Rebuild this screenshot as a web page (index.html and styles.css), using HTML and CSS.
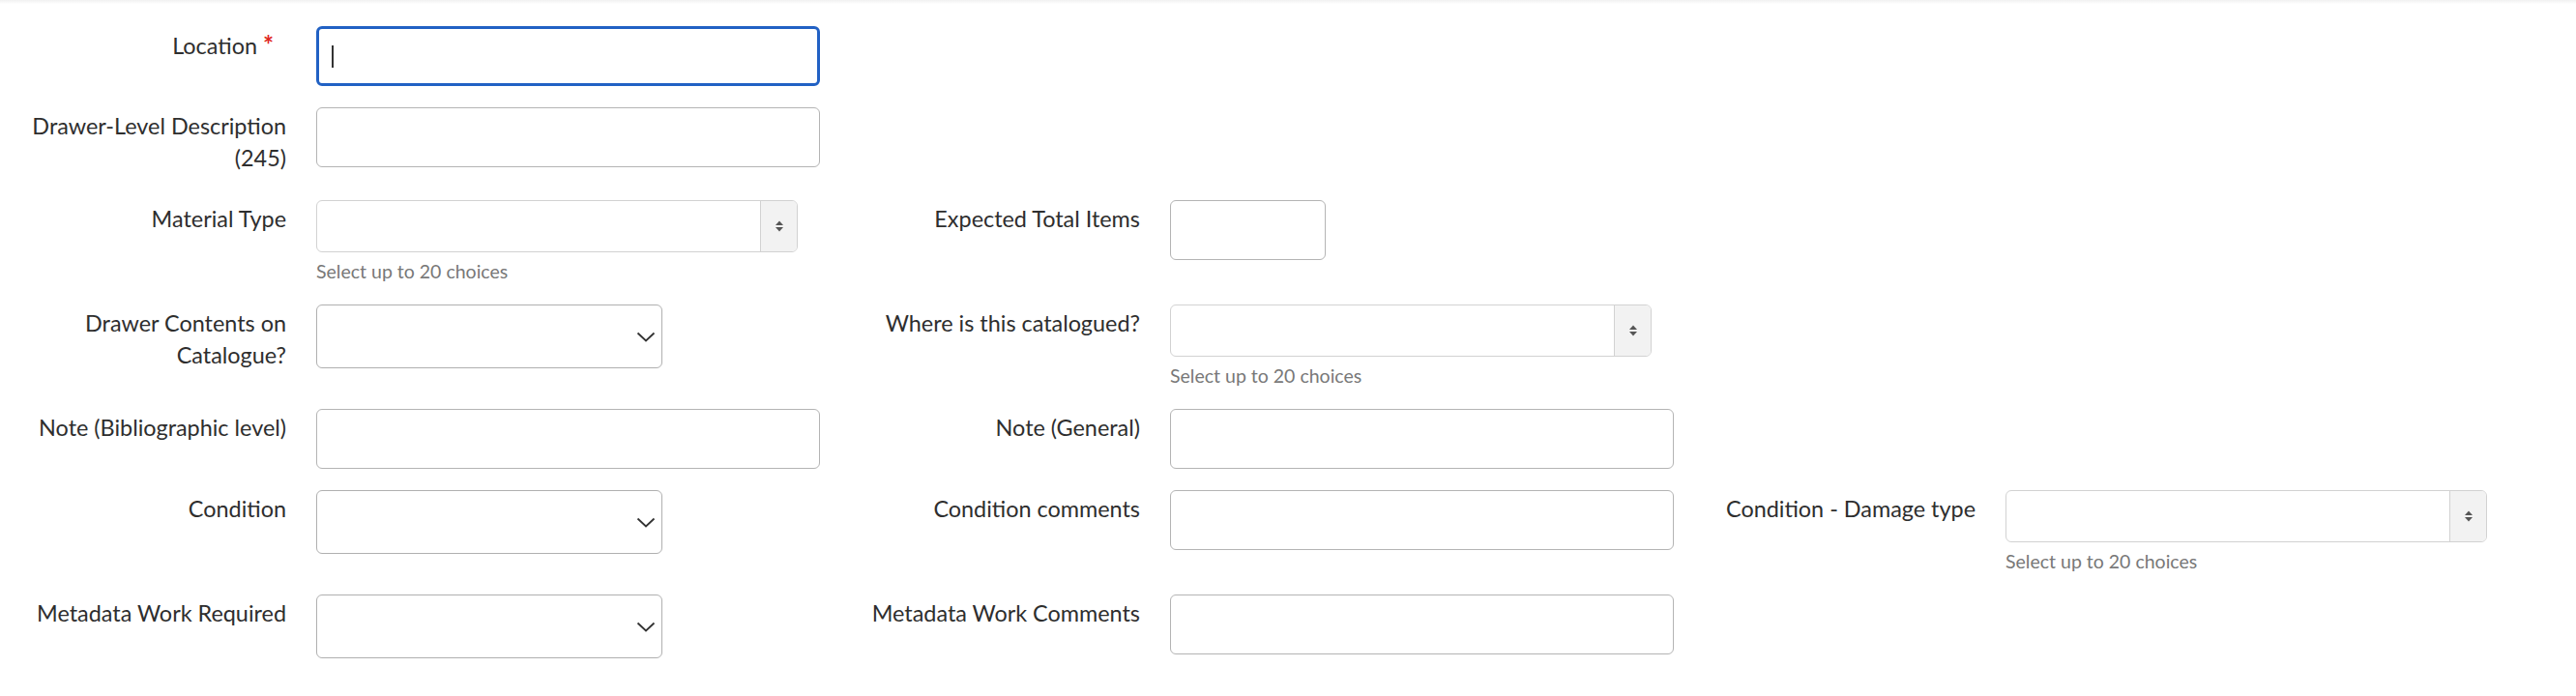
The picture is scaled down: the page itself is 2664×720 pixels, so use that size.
FILE: index.html
```html
<!DOCTYPE html>
<html lang="en">
<head>
<meta charset="utf-8">
<title>Drawer form</title>
<link rel="stylesheet" href="styles.css">
</head>
<body>
<div class="topband"></div>
<form class="form">
  <div class="row">
    <div class="field">
      <label class="label">Location <span class="req">*</span></label>
      <div class="ctl caret-wrap">
        <input class="input wide focused" type="text">
        <span class="caret"></span>
      </div>
    </div>
  </div>

  <div class="row">
    <div class="field">
      <label class="label">Drawer-Level Description (245)</label>
      <div class="ctl"><input class="input wide" type="text"></div>
    </div>
  </div>

  <div class="row">
    <div class="field">
      <label class="label">Material Type</label>
      <div class="ctl">
        <div class="multi"><div class="multi-main"></div><div class="multi-btn"><svg width="10" height="14" viewBox="0 0 10 14"><path d="M1 6 L5 1.5 L9 6 Z" fill="#555"/><path d="M1 8 L5 12.5 L9 8 Z" fill="#555"/></svg></div></div>
        <div class="help">Select up to 20 choices</div>
      </div>
    </div>
    <div class="field">
      <label class="label">Expected Total Items</label>
      <div class="ctl"><input class="input small" type="text"></div>
    </div>
  </div>

  <div class="row">
    <div class="field">
      <label class="label">Drawer Contents on Catalogue?</label>
      <div class="ctl">
        <div class="select"><svg class="chev" width="20" height="11" viewBox="0 0 20 11"><path d="M1.5 1.5 L10 9.5 L18.5 1.5" fill="none" stroke="#333" stroke-width="1.8"/></svg></div>
      </div>
    </div>
    <div class="field">
      <label class="label">Where is this catalogued?</label>
      <div class="ctl">
        <div class="multi"><div class="multi-main"></div><div class="multi-btn"><svg width="10" height="14" viewBox="0 0 10 14"><path d="M1 6 L5 1.5 L9 6 Z" fill="#555"/><path d="M1 8 L5 12.5 L9 8 Z" fill="#555"/></svg></div></div>
        <div class="help">Select up to 20 choices</div>
      </div>
    </div>
  </div>

  <div class="row">
    <div class="field">
      <label class="label">Note (Bibliographic level)</label>
      <div class="ctl"><input class="input wide" type="text"></div>
    </div>
    <div class="field">
      <label class="label">Note (General)</label>
      <div class="ctl"><input class="input wide" type="text"></div>
    </div>
  </div>

  <div class="row">
    <div class="field">
      <label class="label">Condition</label>
      <div class="ctl">
        <div class="select"><svg class="chev" width="20" height="11" viewBox="0 0 20 11"><path d="M1.5 1.5 L10 9.5 L18.5 1.5" fill="none" stroke="#333" stroke-width="1.8"/></svg></div>
      </div>
    </div>
    <div class="field">
      <label class="label">Condition comments</label>
      <div class="ctl"><input class="input wide" type="text"></div>
    </div>
    <div class="field">
      <label class="label">Condition - Damage type</label>
      <div class="ctl">
        <div class="multi"><div class="multi-main"></div><div class="multi-btn"><svg width="10" height="14" viewBox="0 0 10 14"><path d="M1 6 L5 1.5 L9 6 Z" fill="#555"/><path d="M1 8 L5 12.5 L9 8 Z" fill="#555"/></svg></div></div>
        <div class="help">Select up to 20 choices</div>
      </div>
    </div>
  </div>

  <div class="row">
    <div class="field">
      <label class="label">Metadata Work Required</label>
      <div class="ctl">
        <div class="select"><svg class="chev" width="20" height="11" viewBox="0 0 20 11"><path d="M1.5 1.5 L10 9.5 L18.5 1.5" fill="none" stroke="#333" stroke-width="1.8"/></svg></div>
      </div>
    </div>
    <div class="field">
      <label class="label">Metadata Work Comments</label>
      <div class="ctl"><input class="input wide" type="text"></div>
    </div>
  </div>
</form>
</body>
</html>
```

FILE: styles.css
```css
html, body {
  margin: 0;
  padding: 0;
  background: #ffffff;
}

body {
  font-family: "Lato", "Open Sans", "Liberation Sans", sans-serif;
  color: #2e2e2e;
}

.topband {
  height: 4px;
  background: linear-gradient(#f1f1f1, #ffffff);
}

.form {
  display: flex;
  flex-direction: column;
  gap: 22px;
  padding-top: 23px;
}

.row {
  display: grid;
  grid-template-columns: 883px 864px 864px;
  align-items: start;
}

.field {
  display: flex;
  align-items: flex-start;
}

.label {
  flex: 0 0 296px;
  width: 296px;
  box-sizing: border-box;
  margin-right: 31px;
  padding: 3px 0 5px;
  text-align: right;
  font-size: 23.4px;
  line-height: 33px;
  color: #2e2e2e;
}

.req {
  color: #e0271f;
  font-weight: 700;
  font-size: 26px;
  padding-right: 13px;
}

.ctl {
  display: flex;
  flex-direction: column;
}

.caret-wrap {
  position: relative;
}

.input {
  box-sizing: border-box;
  height: 62px;
  border: 1px solid #b4b4b4;
  border-radius: 6px;
  background: #ffffff;
  font-family: inherit;
  font-size: 22px;
  padding: 0 14px;
  margin: 0;
  outline: none;
}

.input.wide {
  width: 521px;
}

.input.small {
  width: 161px;
}

.input.focused {
  border: 3px solid #2161c4;
}

.caret {
  position: absolute;
  left: 16px;
  top: 20px;
  width: 2px;
  height: 23px;
  background: #333333;
}

.select {
  box-sizing: border-box;
  width: 358px;
  height: 66px;
  border: 1px solid #b0b0b0;
  border-radius: 6px;
  background: #ffffff;
  display: flex;
  align-items: center;
  justify-content: flex-end;
  padding-right: 6px;
}

.chev {
  display: block;
}

.multi {
  box-sizing: border-box;
  width: 498px;
  height: 54px;
  border: 1px solid #d2d2d2;
  border-radius: 6px;
  background: #ffffff;
  display: flex;
  overflow: hidden;
}

.multi-main {
  flex: 1;
}

.multi-btn {
  width: 37px;
  border-left: 1px solid #d2d2d2;
  background: #f2f2f2;
  display: flex;
  align-items: center;
  justify-content: center;
}

.multi-btn svg {
  display: block;
}

.help {
  margin-top: 8px;
  font-size: 19.5px;
  line-height: 24px;
  color: #787878;
}
```
